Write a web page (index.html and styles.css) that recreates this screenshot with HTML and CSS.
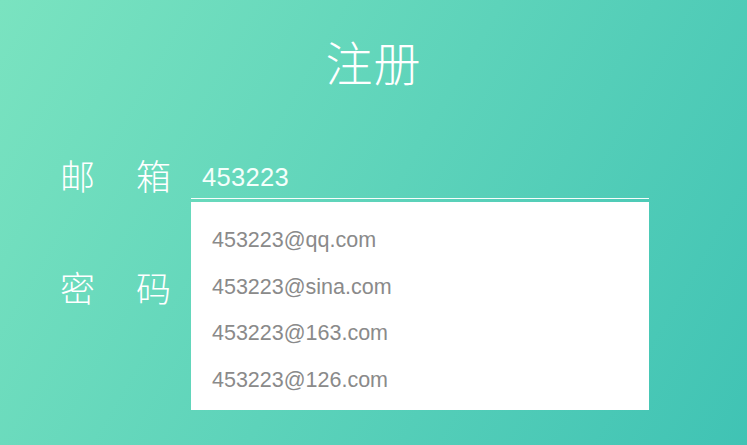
FILE: index.html
```html
<!DOCTYPE html>
<html lang="zh-CN">
<head>
<meta charset="utf-8">
<title>注册</title>
<link rel="stylesheet" href="styles.css">
</head>
<body>
<div class="page">
  <h1 class="title">注册</h1>
  <form class="form">
    <div class="row">
      <label class="label"><span>邮</span><span>箱</span></label>
      <div class="field">
        <div class="value">453223</div>
        <ul class="dropdown">
          <li class="option">453223@qq.com</li>
          <li class="option">453223@sina.com</li>
          <li class="option">453223@163.com</li>
          <li class="option">453223@126.com</li>
        </ul>
      </div>
    </div>
    <div class="row row-password">
      <label class="label"><span>密</span><span>码</span></label>
      <div class="field">
        <div class="value"></div>
      </div>
    </div>
  </form>
</div>
</body>
</html>
```
FILE: styles.css
```css
* { box-sizing: border-box; }
html, body { margin: 0; padding: 0; }
body {
  width: 747px;
  height: 445px;
  overflow: hidden;
  background: linear-gradient(120deg, #7ae3c0 0%, #40c3b4 100%);
  font-family: "Noto Sans CJK SC", "Noto Sans", sans-serif;
  color: #ffffff;
}
.page {
  padding-top: 36px;
}
.title {
  margin: 0;
  font-size: 47px;
  line-height: 50px;
  font-weight: 300;
  text-align: center;
  letter-spacing: 1px;
}
.form {
  margin-top: 64px;
  padding-left: 60px;
}
.row {
  display: flex;
  gap: 20px;
  height: 49px;
}
.row-password {
  margin-top: 63px;
}
.label {
  width: 111px;
  display: flex;
  justify-content: space-between;
  font-size: 35px;
  line-height: 49px;
  font-weight: 300;
}
.field {
  position: relative;
  width: 458px;
  height: 49px;
  border-bottom: 1px solid rgba(255, 255, 255, 0.95);
  padding: 15px 0 0 11px;
}
.value {
  font-family: "Liberation Sans", Arial, sans-serif;
  font-size: 25.5px;
  line-height: 1;
  letter-spacing: 0.3px;
  color: #f4fffb;
}
.dropdown {
  position: absolute;
  top: calc(100% + 4px);
  left: 0;
  width: 458px;
  height: 208px;
  margin: 0;
  padding: 15px 0 7px 21px;
  list-style: none;
  background: #ffffff;
  z-index: 2;
}
.option {
  font-family: "Liberation Sans", Arial, sans-serif;
  font-size: 21.5px;
  line-height: 46.5px;
  color: #8a8a8a;
}
```
